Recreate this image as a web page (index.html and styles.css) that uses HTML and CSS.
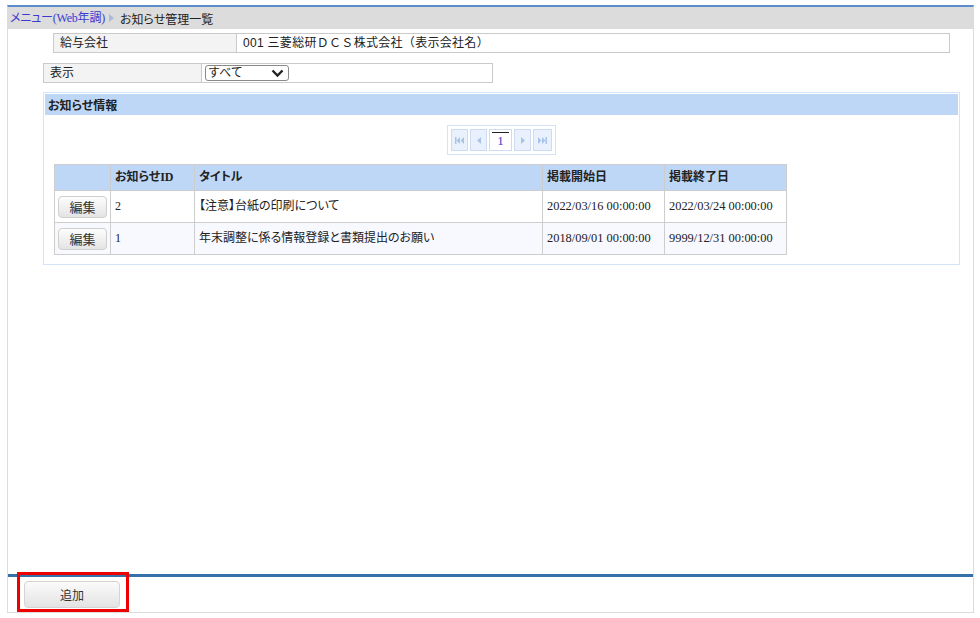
FILE: index.html
```html
<!DOCTYPE html>
<html>
<head>
<meta charset="utf-8">
<title>お知らせ管理一覧</title>
<link rel="stylesheet" href="styles.css">
</head>

<body>

<div id="frame">
    <div class="breadcrumb">
        <a class="crumb_link" href="#">メニュー(Web年調)</a>
        <svg class="crumb_sep" width="5" height="8" viewBox="0 0 5 8"><path d="M0 0 L5 4 L0 8 Z" fill="#a8bcd8"/></svg>
        <span class="crumb_current">お知らせ管理一覧</span>
    </div>

    <div id="main">
        <div class="field_row company_row">
            <div class="field_label company_label">給与会社</div>
            <div class="field_value">001 三菱総研ＤＣＳ株式会社（表示会社名）</div>
        </div>

        <div class="field_row filter_row">
            <div class="field_label filter_label">表示</div>
            <div class="field_value">
                <div class="select_box">
                    <span>すべて</span>
                    <svg width="13" height="9" viewBox="0 0 13 9"><path d="M1.5 1.5 L6.5 6.5 L11.5 1.5" fill="none" stroke="#222" stroke-width="2.4"/></svg>
                </div>
            </div>
        </div>

        <div class="panel">
            <div class="panel_head">お知らせ情報</div>

            <div class="pager_wrap">
                <div class="pager">
                    <span class="pg_btn">
                        <svg width="9" height="7" viewBox="0 0 9 7"><rect x="0" y="0" width="1.5" height="7" fill="#a9c3e8"/><path d="M5 0 L1.5 3.5 L5 7 Z M9 0 L5.5 3.5 L9 7 Z" fill="#a9c3e8"/></svg>
                    </span>
                    <span class="pg_btn">
                        <svg width="4" height="7" viewBox="0 0 4 7"><path d="M4 0 L0 3.5 L4 7 Z" fill="#a9c3e8"/></svg>
                    </span>
                    <span class="pg_page"><span class="pg_num">1</span></span>
                    <span class="pg_btn">
                        <svg width="4" height="7" viewBox="0 0 4 7"><path d="M0 0 L4 3.5 L0 7 Z" fill="#a9c3e8"/></svg>
                    </span>
                    <span class="pg_btn pg_last">
                        <svg width="9" height="7" viewBox="0 0 9 7"><path d="M0 0 L3.5 3.5 L0 7 Z M4 0 L7.5 3.5 L4 7 Z" fill="#a9c3e8"/><rect x="7.5" y="0" width="1.5" height="7" fill="#a9c3e8"/></svg>
                    </span>
                </div>
            </div>

            <table class="notice_table">
                <tr class="head_row">
                    <th class="col_btn"></th>
                    <th class="col_id">お知らせID</th>
                    <th class="col_title">タイトル</th>
                    <th class="col_date">掲載開始日</th>
                    <th class="col_date">掲載終了日</th>
                </tr>
                <tr>
                    <td class="col_btn"><button class="edit_btn">編集</button></td>
                    <td>2</td>
                    <td>【注意】台紙の印刷について</td>
                    <td class="date_cell">2022/03/16 00:00:00</td>
                    <td class="date_cell">2022/03/24 00:00:00</td>
                </tr>
                <tr class="alt_row">
                    <td class="col_btn"><button class="edit_btn">編集</button></td>
                    <td>1</td>
                    <td>年末調整に係る情報登録と書類提出のお願い</td>
                    <td class="date_cell">2018/09/01 00:00:00</td>
                    <td class="date_cell">9999/12/31 00:00:00</td>
                </tr>
            </table>
        </div>
    </div>

    <div class="footer">
        <button class="add_btn">追加</button>
        <div class="mark_box"></div>
    </div>
</div>

</body>
</html>
```

FILE: styles.css
```css
body {
    margin: 0;
    padding: 0;
    background: #fff;
    color: #222;
    font: 12px/1.25 "Liberation Serif", "Noto Sans CJK JP", serif;
}
#frame {
    box-sizing: border-box;
    margin: 5px 0 0 7px;
    width: 967px;
    height: 608px;
    border: 1px solid #dcdcdc;
    border-top: 2px solid #5b8ccc;
    display: flex;
    flex-direction: column;
}
.breadcrumb {
    height: 22px;
    background: #dcdcdc;
    display: flex;
    align-items: center;
    padding-left: 2px;
    flex-shrink: 0;
    font-feature-settings: "palt";
}
.crumb_link {
    color: #3a3ad2;
    text-decoration: none;
    letter-spacing: -0.2px;
}
.crumb_sep {
    margin: 0 6px 0 4px;
}
.crumb_current {
    color: #222;
    font-family: "Noto Sans CJK JP", sans-serif;
}
#main {
    flex: 1;
    padding-top: 4px;
}
.field_row {
    box-sizing: border-box;
    height: 20px;
    display: flex;
    border: 1px solid #cacaca;
    font-family: "Liberation Sans", "Noto Sans CJK JP", sans-serif;
}
.company_row {
    margin-left: 45px;
    width: 897px;
}
.company_row .field_value {
    letter-spacing: 0.3px;
}
.filter_row {
    margin: 10px 0 0 35px;
    width: 450px;
}
.field_label {
    background: #f3f3f3;
    border-right: 1px solid #cacaca;
    padding-left: 6px;
    display: flex;
    align-items: center;
    box-sizing: border-box;
}
.company_label {
    width: 183px;
}
.filter_label {
    width: 158px;
}
.field_value {
    flex: 1;
    display: flex;
    align-items: center;
    padding-left: 6px;
}
.filter_row .field_value {
    padding-left: 3px;
}
.select_box {
    box-sizing: border-box;
    width: 84px;
    height: 16px;
    border: 1px solid #8a8a8a;
    border-radius: 3px;
    display: flex;
    align-items: center;
    justify-content: space-between;
    padding: 0 4px 0 2px;
}
.panel {
    margin: 9px 0 0 35px;
    width: 917px;
    box-sizing: border-box;
    border: 1px solid #d4e3f6;
    padding: 1px 1px 9px 1px;
}
.panel_head {
    height: 21px;
    background: #bed7f7;
    font-weight: bold;
    font-family: "Noto Sans CJK JP", sans-serif;
    font-feature-settings: "palt";
    display: flex;
    align-items: center;
    padding-left: 3px;
}
.pager_wrap {
    display: flex;
    justify-content: center;
    margin-top: 10px;
}
.pager {
    display: flex;
    gap: 2px;
    padding: 3px;
    border: 1px solid #d4e3f6;
}
.pg_btn {
    box-sizing: border-box;
    width: 17px;
    height: 22px;
    background: #e9f1fc;
    border: 1px solid #cddcf2;
    display: flex;
    align-items: center;
    justify-content: center;
}
.pg_last {
    width: 19px;
}
.pg_page {
    box-sizing: border-box;
    width: 23px;
    height: 22px;
    background: #fff;
    border: 1px solid #cddcf2;
    display: flex;
    justify-content: center;
    padding-top: 2px;
}
.pg_num {
    width: 17px;
    border-top: 1px solid #222;
    text-align: center;
    color: #3a3ad2;
    font-size: 13px;
    line-height: 15px;
}
.notice_table {
    margin: 9px 0 0 9px;
    border-collapse: collapse;
    font-feature-settings: "palt";
}
.notice_table th,
.notice_table td {
    border: 1px solid #cdcdcd;
    padding: 0 4px;
    text-align: left;
    white-space: nowrap;
}
.notice_table th {
    height: 25px;
    background: #bed7f7;
    font-weight: bold;
}
.notice_table td {
    height: 31px;
}
.notice_table .date_cell {
    font-size: 12.4px;
}
.alt_row td {
    background: #f8f8ff;
}
.notice_table .col_btn {
    width: 48px;
    padding: 0 3px;
}
.col_id {
    width: 75px;
}
.col_title {
    width: 339px;
}
.col_date {
    width: 113px;
}
.edit_btn {
    width: 49px;
    height: 22px;
    border: 1px solid #cfcfcf;
    border-radius: 4px;
    background: linear-gradient(#fdfdfd, #e4e4e4);
    font: 13px "Noto Sans CJK JP", sans-serif;
    color: #333;
    padding: 0;
}
.footer {
    position: relative;
    height: 35px;
    border-top: 3px solid #3570a8;
    flex-shrink: 0;
}
.add_btn {
    margin: 4px 0 0 16px;
    width: 96px;
    height: 27px;
    border: 1px solid #d4d4d4;
    border-radius: 4px;
    background: linear-gradient(#fbfbfb, #e3e3e3);
    font: 12px "Noto Sans CJK JP", sans-serif;
    color: #333;
    padding: 0;
}
.mark_box {
    position: absolute;
    left: 9px;
    top: -5px;
    width: 112px;
    height: 40px;
    box-sizing: border-box;
    border: 3px solid #ee0000;
}
```
